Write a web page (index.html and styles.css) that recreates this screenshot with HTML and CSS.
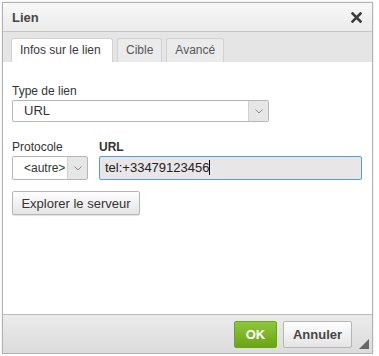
FILE: index.html
```html
<!DOCTYPE html>
<html lang="fr">
<head>
    <meta charset="UTF-8">
    <title>Lien</title>
    <link rel="stylesheet" href="styles.css">
</head>
<body>
    <div class="dialog">
        <div class="title">
            <span>Lien</span>
            <svg class="close" width="11" height="11" viewBox="0 0 11 11">
                <path d="M1.5 1.5 L9.5 9.5 M9.5 1.5 L1.5 9.5" stroke="#3c3c3c" stroke-width="2.6" stroke-linecap="square"/>
            </svg>
        </div>
        <div class="tabs">
            <div class="tab active">Infos sur le lien</div>
            <div class="tab">Cible</div>
            <div class="tab">Avancé</div>
        </div>
        <div class="panel">
            <div class="field">
                <label>Type de lien</label>
                <div class="select wide">
                    <span class="value">URL</span>
                    <span class="arrow"><svg width="8" height="5" viewBox="0 0 8 5"><path d="M0.5 0.5 L4 4 L7.5 0.5" fill="none" stroke="#8a8a8a" stroke-width="1"/></svg></span>
                </div>
            </div>
            <div class="row">
                <div class="field">
                    <label>Protocole</label>
                    <div class="select proto">
                        <span class="value">&lt;autre&gt;</span>
                        <span class="arrow"><svg width="8" height="5" viewBox="0 0 8 5"><path d="M0.5 0.5 L4 4 L7.5 0.5" fill="none" stroke="#8a8a8a" stroke-width="1"/></svg></span>
                    </div>
                </div>
                <div class="field grow">
                    <label class="bold">URL</label>
                    <div class="input focus">tel:+33479123456<span class="caret"></span></div>
                </div>
            </div>
            <div class="btn browse">Explorer le serveur</div>
        </div>
        <div class="footer">
            <div class="btn ok">OK</div>
            <div class="btn cancel">Annuler</div>
            <div class="resize"></div>
        </div>
    </div>
</body>
</html>
```

FILE: styles.css
```css
body {
    margin: 0;
    background: #fff;
    font-family: "Liberation Sans", Arial, sans-serif;
    font-size: 12px;
    color: #333;
}

.dialog {
    margin: 2px 0 0 2px;
    width: 371px;
    height: 352px;
    box-sizing: border-box;
    border: 1px solid #b2b2b2;
    display: flex;
    flex-direction: column;
    box-shadow: 0 0 2px rgba(0, 0, 0, 0.15);
}

.title {
    height: 28px;
    border-bottom: 1px solid #c7c7c7;
    background: linear-gradient(#f8f8f8, #ebebeb);
    display: flex;
    align-items: center;
    justify-content: space-between;
    padding: 0 10px 0 9px;
    font-size: 13px;
    font-weight: bold;
    color: #474747;
}

.close {
    margin-top: 1px;
}

.tabs {
    height: 30px;
    background: #e5e5e5;
    display: flex;
    align-items: flex-end;
    gap: 4px;
    padding-left: 8px;
}

.tab {
    height: 23px;
    line-height: 23px;
    padding: 0 8px;
    border: 1px solid #d1d1d1;
    border-bottom: none;
    border-radius: 3px 3px 0 0;
    background: #ebebeb;
    color: #595959;
}

.tab.active {
    background: #fff;
    color: #383838;
    width: 84px;
}

.panel {
    flex: 1;
    background: #fff;
    padding: 22px 10px 0 9px;
}

.field label {
    display: block;
    line-height: 15px;
    margin-bottom: 1px;
}

.field label.bold {
    font-weight: bold;
}

.select {
    display: flex;
    border: 1px solid #b6b6b6;
    border-radius: 2px;
    box-sizing: border-box;
    background: #fff;
}

.select .value {
    flex: 1;
    padding-left: 10px;
}

.select .arrow {
    width: 19px;
    background: #e6e6e6;
    border-left: 1px solid #d0d0d0;
    display: flex;
    align-items: center;
    justify-content: center;
}

.select.wide {
    width: 257px;
    height: 22px;
    line-height: 20px;
}

.select.wide .value {
    font-size: 13px;
    padding-left: 11px;
}

.select.proto {
    width: 76px;
    height: 24px;
    line-height: 22px;
}

.select.proto .value {
    padding-left: 11px;
}

.row {
    display: flex;
    gap: 11px;
    margin-top: 18px;
}

.grow {
    flex: 1;
}

.input {
    height: 24px;
    line-height: 22px;
    box-sizing: border-box;
    border: 1px solid #b6b6b6;
    border-radius: 2px;
    padding-left: 5px;
    font-size: 13px;
    color: #222;
}

.input.focus {
    border-color: #529fd4;
    background: #e8e6e6;
}

.caret {
    display: inline-block;
    width: 1px;
    height: 15px;
    background: #000;
    vertical-align: -3px;
}

.btn {
    display: inline-flex;
    align-items: center;
    justify-content: center;
    box-sizing: border-box;
    border: 1px solid #b6b6b6;
    border-radius: 2px;
    background: linear-gradient(#fff, #e4e4e4);
    color: #333;
    font-size: 13px;
}

.browse {
    margin-top: 11px;
    width: 128px;
    height: 24px;
    box-shadow: 0 1px 1px rgba(0, 0, 0, 0.12);
}

.footer {
    height: 38px;
    border-top: 1px solid #bcbcbc;
    background: linear-gradient(#ebebeb, #dcdcdc);
    display: flex;
    align-items: center;
    justify-content: flex-end;
    gap: 6px;
    padding-right: 20px;
    position: relative;
}

.ok {
    width: 43px;
    height: 27px;
    background: linear-gradient(#8ec73b, #6ba514);
    border-color: #6aa51e;
    color: #fff;
    font-weight: bold;
}

.cancel {
    width: 69px;
    height: 27px;
    font-weight: bold;
    color: #474747;
}

.resize {
    position: absolute;
    right: 3px;
    bottom: 4px;
    width: 0;
    height: 0;
    border-left: 10px solid transparent;
    border-bottom: 10px solid #666;
}
```
